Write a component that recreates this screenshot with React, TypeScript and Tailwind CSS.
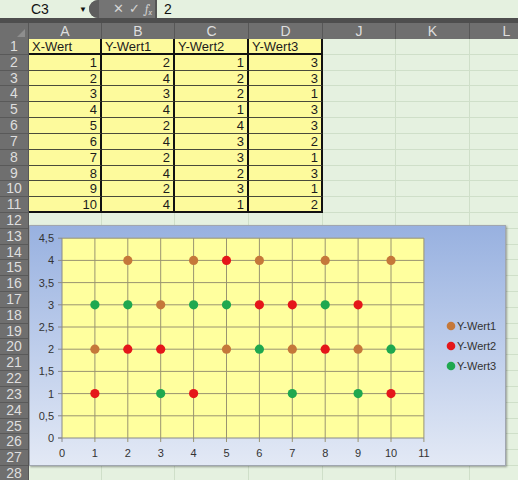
import React from 'react';

const cols = [
  { name: 'A', w: 73 },
  { name: 'B', w: 73 },
  { name: 'C', w: 74 },
  { name: 'D', w: 74 },
  { name: 'J', w: 73 },
  { name: 'K', w: 74 },
  { name: 'L', w: 74 },
];

const header = ['X-Wert', 'Y-Wert1', 'Y-Wert2', 'Y-Wert3'];
const data = [
  [1, 2, 1, 3],
  [2, 4, 2, 3],
  [3, 3, 2, 1],
  [4, 4, 1, 3],
  [5, 2, 4, 3],
  [6, 4, 3, 2],
  [7, 2, 3, 1],
  [8, 4, 2, 3],
  [9, 2, 3, 1],
  [10, 4, 1, 2],
];

const series = [
  { name: 'Y-Wert1', color: '#c5783a', idx: 1 },
  { name: 'Y-Wert2', color: '#e5161a', idx: 2 },
  { name: 'Y-Wert3', color: '#1fa84f', idx: 3 },
];

const px = (x: number) => 32 + x * 32.9;
const py = (y: number) => 212 - y * 44.4;

const Chart: React.FC = () => (
  <div className="absolute left-[29px] top-[225px] w-[477px] h-[241px] border border-[#a0a6b0] shadow-[1px_1px_2px_rgba(0,0,0,0.35)] bg-gradient-to-b from-[#98b1e0] to-[#e3e9f5]">
    <svg width="477" height="241" className="block" style={{ fontFamily: '"Liberation Sans", Arial, sans-serif' }}>
      <rect x={px(0)} y={py(4.5)} width={px(11) - px(0)} height={py(0) - py(4.5)} fill="#ffff9e" />
      {[0.5, 1, 1.5, 2, 2.5, 3, 3.5, 4, 4.5].map((v) => (
        <line key={'h' + v} x1={px(0)} x2={px(11)} y1={py(v)} y2={py(v)} stroke="#9a9470" strokeWidth="1" />
      ))}
      {[1, 2, 3, 4, 5, 6, 7, 8, 9, 10, 11].map((v) => (
        <line key={'v' + v} x1={px(v)} x2={px(v)} y1={py(4.5)} y2={py(0) + 4} stroke="#9a9470" strokeWidth="1" />
      ))}
      <line x1={px(0)} x2={px(0)} y1={py(4.5)} y2={py(0) + 4} stroke="#8a8a8a" />
      <line x1={px(0) - 4} x2={px(11)} y1={py(0)} y2={py(0)} stroke="#8a8a8a" />
      {[0, 0.5, 1, 1.5, 2, 2.5, 3, 3.5, 4, 4.5].map((v) => (
        <line key={'t' + v} x1={px(0) - 4} x2={px(0)} y1={py(v)} y2={py(v)} stroke="#8a8a8a" />
      ))}
      {[0, 0.5, 1, 1.5, 2, 2.5, 3, 3.5, 4, 4.5].map((v) => (
        <text key={'yl' + v} x={24} y={py(v) + 4} textAnchor="end" fontSize="11" fill="#333">
          {String(v).replace('.', ',')}
        </text>
      ))}
      {[0, 1, 2, 3, 4, 5, 6, 7, 8, 9, 10, 11].map((v) => (
        <text key={'xl' + v} x={px(v)} y={py(0) + 19} textAnchor="middle" fontSize="11" fill="#333">
          {v}
        </text>
      ))}
      {series.map((s) =>
        data.map((r) => (
          <circle key={s.name + r[0]} cx={px(r[0])} cy={py(r[s.idx])} r="4.6" fill={s.color} />
        ))
      )}
      {series.map((s, i) => (
        <g key={'lg' + s.name}>
          <circle cx={421} cy={100 + i * 20} r="4.3" fill={s.color} />
          <text x={427} y={104 + i * 20} fontSize="11" fill="#333">
            {s.name}
          </text>
        </g>
      ))}
    </svg>
  </div>
);

const App: React.FC = () => {
  const rowNums = Array.from({ length: 28 }, (_, i) => i + 1);

  return (
    <div
      className="relative w-[518px] h-[480px] overflow-hidden bg-[#e5f1e0]"
      style={{ fontFamily: '"Liberation Sans", Arial, sans-serif' }}
    >
      {/* Formula bar */}
      <div className="flex h-[18px] items-stretch bg-[#e5f1e0] text-[14px] text-[#111]">
        <div className="w-[89px] flex items-center pl-[31px] relative">
          C3
          <span className="absolute left-[79px] top-[4px] text-[8px]">▼</span>
        </div>
        <div className="w-[66px] flex items-center bg-[#747474] rounded-l-full text-[#d4d4d4] text-[13px]">
          <span className="w-[10px] h-[18px] rounded-l-full bg-[#5e5e5e]" />
          <span className="ml-[14px]">✕</span>
          <span className="ml-[5px]">✓</span>
          <span className="ml-[5px] italic font-serif text-[12px]">
            f<sub className="text-[8px]">x</sub>
          </span>
        </div>
        <div className="w-[2px] bg-[#555]" />
        <div className="flex-1 flex items-center pl-[7px]">2</div>
      </div>
      <div className="h-[5px] bg-[#4e4e4e]" />

      {/* Column header */}
      <div className="flex h-[16px] bg-[#6f6f6f] text-[#dedede] text-[14px] leading-[16px]">
        <div className="w-[29px] shrink-0 relative border-r border-[#575757]">
          <span className="absolute right-[3px] bottom-[2px] w-0 h-0 border-l-[8px] border-l-transparent border-b-[8px] border-b-[#8e8e8e]" />
        </div>
        {cols.map((c) => (
          <div key={c.name} className="shrink-0 text-center border-r border-[#575757]" style={{ width: c.w }}>
            {c.name}
          </div>
        ))}
      </div>

      {/* Rows */}
      {rowNums.map((n) => {
        const isData = n <= 11;
        return (
          <div key={n} className="flex h-[15.82px] text-[13px] leading-[15px]">
            <div className="w-[29px] shrink-0 bg-[#6f6f6f] text-[#dedede] text-[14px] text-center border-b border-[#595959] border-r border-r-[#575757]">
              {n}
            </div>
            {cols.map((c, ci) => {
              if (isData && ci < 4) {
                const val = n === 1 ? header[ci] : data[n - 2][ci];
                return (
                  <div
                    key={c.name}
                    className={`shrink-0 bg-[#fdfa9c] text-[#1c1c1c] border-r-2 border-r-[#111] ${
                      n === 1 || n === 11 ? 'border-b-2 border-b-[#111]' : 'border-b border-b-[#4a4a3a]'
                    } ${n === 1 ? 'text-left pl-[3px]' : 'text-right pr-[3px]'}`}
                    style={{ width: c.w }}
                  >
                    {val}
                  </div>
                );
              }
              return (
                <div
                  key={c.name}
                  className="shrink-0 border-r border-b border-[#cfdfc9]"
                  style={{ width: c.w }}
                />
              );
            })}
          </div>
        );
      })}

      <Chart />
    </div>
  );
};

export default App;
